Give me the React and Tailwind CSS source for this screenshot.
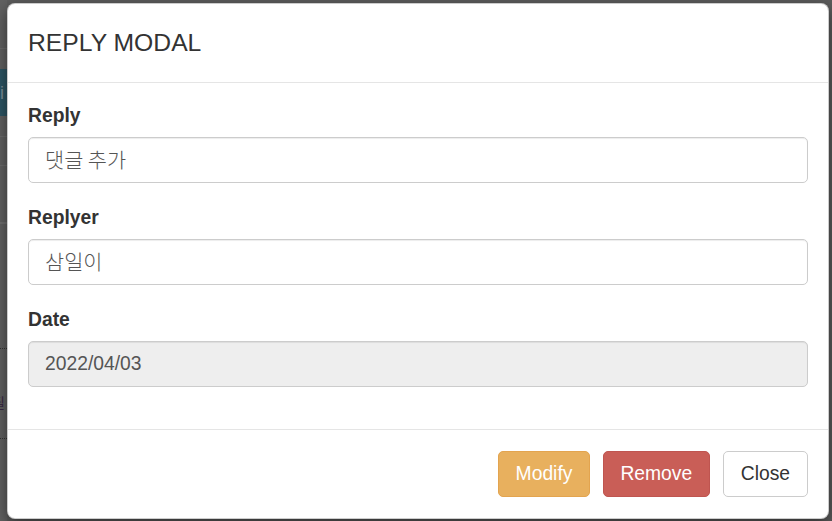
export default function App() {
  const font = { fontFamily: '"Liberation Sans", Arial, "Noto Sans CJK KR", sans-serif' };
  const ko = { fontFamily: '"Noto Sans CJK KR", "Liberation Sans", sans-serif' };
  return (
    <div className="relative w-[832px] h-[521px] overflow-hidden bg-[#5c5c5c]" style={font}>
      {/* page behind the backdrop, left edge visible */}
      <div className="flex flex-col w-[7px] h-full bg-[#616161] overflow-hidden">
        <div className="h-[48px]" />
        <div className="h-px bg-[#6c6c6c]" />
        <div className="h-[20px]" />
        <div className="h-[47px] bg-[#2d5564] flex items-center text-[#7b8f98] text-[18px] leading-none">i</div>
        <div className="h-[20px]" />
        <div className="h-px bg-[#6c6c6c]" />
        <div className="h-[28px]" />
        <div className="h-px bg-[#6c6c6c]" />
        <div className="h-[56px]" />
        <div className="h-[2px] bg-[#6e6e6e]" />
        <div className="h-[124px]" />
        <div className="h-px border-t border-dotted border-[#333]" />
        <div className="h-[43px]" />
        <div className="h-[20px] text-[#3a2a45] text-[14px] leading-[20px] -ml-[8px]" style={ko}>필</div>
        <div className="h-[26px]" />
        <div className="h-px border-t border-dotted border-[#333]" />
      </div>

      {/* modal */}
      <div className="absolute left-[7px] top-[3px] w-[822px] h-[516px] bg-white rounded-[8px] border border-black/20 shadow-[0_5px_15px_rgba(0,0,0,0.5)] flex flex-col overflow-hidden">
        <div className="h-[79px] border-b border-[#e5e5e5] flex items-center px-5 shrink-0">
          <h4 className="text-[24.7px] text-[#333] leading-[1.1]">REPLY MODAL</h4>
        </div>
        <div className="pt-5 px-5 pb-[20px] flex flex-col text-[19.3px]">
          <label className="font-bold text-[#333] leading-[26px] mb-[8px]">Reply</label>
          <div className="h-[46px] border border-[#ccc] rounded-[5px] px-4 flex items-center text-[#555] text-[20.8px] font-light shadow-[inset_0_1px_1px_rgba(0,0,0,0.075)]" style={ko}>댓글 추가</div>
          <label className="font-bold text-[#333] leading-[26px] mb-[8px] mt-[22px]">Replyer</label>
          <div className="h-[46px] border border-[#ccc] rounded-[5px] px-4 flex items-center text-[#555] text-[20.8px] font-light shadow-[inset_0_1px_1px_rgba(0,0,0,0.075)]" style={ko}>삼일이</div>
          <label className="font-bold text-[#333] leading-[26px] mb-[8px] mt-[22px]">Date</label>
          <div className="h-[46px] border border-[#ccc] rounded-[5px] px-4 flex items-center text-[#555] bg-[#eeeeee] shadow-[inset_0_1px_1px_rgba(0,0,0,0.075)]">2022/04/03</div>
        </div>
        <div className="flex-1" />
        <div className="h-[89px] border-t border-[#e5e5e5] flex items-center justify-end gap-[13px] px-5 shrink-0 text-[19.3px]">
          <button className="h-[46px] px-[16.5px] rounded-[5px] border border-[#e3a44f] bg-[#e8b05e] text-white">Modify</button>
          <button className="h-[46px] px-[16.5px] rounded-[5px] border border-[#bf5550] bg-[#c95e57] text-white">Remove</button>
          <button className="h-[46px] px-[17px] rounded-[5px] border border-[#ccc] bg-white text-[#333]">Close</button>
        </div>
      </div>
    </div>
  );
}
